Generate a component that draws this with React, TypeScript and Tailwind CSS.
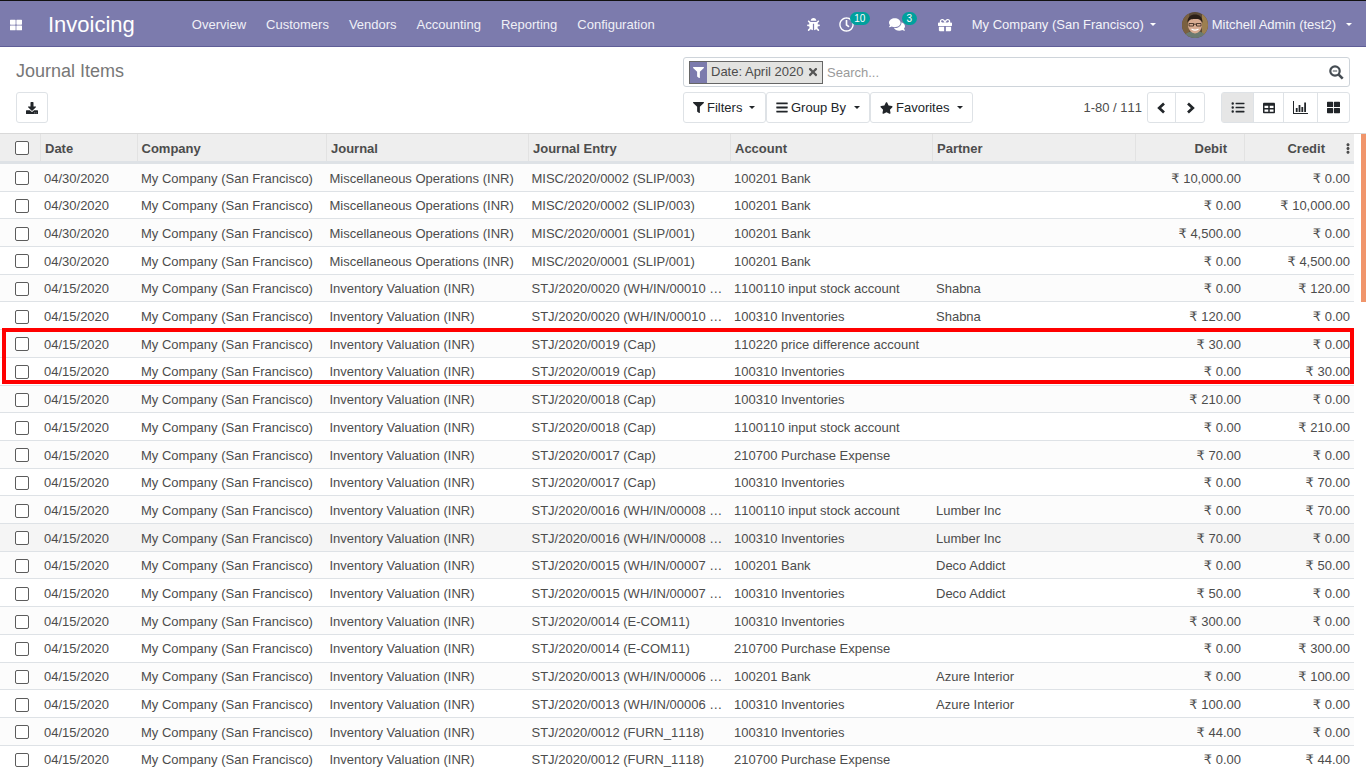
import React from "react";
import {
  FaThLarge, FaBug, FaRegClock, FaComments, FaGift, FaFilter, FaTimes, FaBars, FaStar,
  FaListUl, FaTable, FaDownload, FaEllipsisV,
} from "react-icons/fa";

const Caret = ({ className = "" }: { className?: string }) => (
  <span className={`inline-block w-0 h-0 border-x-[3px] border-x-transparent border-t-[3px] ${className}`} />
);

const Check = () => (
  <span className="block w-[14px] h-[14px] bg-white border-[1.5px] border-[#5c5c5c] rounded-[2px] shrink-0" />
);

const NAV = ["Overview", "Customers", "Vendors", "Accounting", "Reporting", "Configuration"];

type Row = [string, string, string, string, string, string, string];
const S = "My Company (San Francisco)";
const M = "Miscellaneous Operations (INR)";
const I = "Inventory Valuation (INR)";
const ROWS: Row[] = [
  ["04/30/2020", M, "MISC/2020/0002 (SLIP/003)", "100201 Bank", "", "₹ 10,000.00", "₹ 0.00"],
  ["04/30/2020", M, "MISC/2020/0002 (SLIP/003)", "100201 Bank", "", "₹ 0.00", "₹ 10,000.00"],
  ["04/30/2020", M, "MISC/2020/0001 (SLIP/001)", "100201 Bank", "", "₹ 4,500.00", "₹ 0.00"],
  ["04/30/2020", M, "MISC/2020/0001 (SLIP/001)", "100201 Bank", "", "₹ 0.00", "₹ 4,500.00"],
  ["04/15/2020", I, "STJ/2020/0020 (WH/IN/00010 (Shabna))", "1100110 input stock account", "Shabna", "₹ 0.00", "₹ 120.00"],
  ["04/15/2020", I, "STJ/2020/0020 (WH/IN/00010 (Shabna))", "100310 Inventories", "Shabna", "₹ 120.00", "₹ 0.00"],
  ["04/15/2020", I, "STJ/2020/0019 (Cap)", "110220 price difference account", "", "₹ 30.00", "₹ 0.00"],
  ["04/15/2020", I, "STJ/2020/0019 (Cap)", "100310 Inventories", "", "₹ 0.00", "₹ 30.00"],
  ["04/15/2020", I, "STJ/2020/0018 (Cap)", "100310 Inventories", "", "₹ 210.00", "₹ 0.00"],
  ["04/15/2020", I, "STJ/2020/0018 (Cap)", "1100110 input stock account", "", "₹ 0.00", "₹ 210.00"],
  ["04/15/2020", I, "STJ/2020/0017 (Cap)", "210700 Purchase Expense", "", "₹ 70.00", "₹ 0.00"],
  ["04/15/2020", I, "STJ/2020/0017 (Cap)", "100310 Inventories", "", "₹ 0.00", "₹ 70.00"],
  ["04/15/2020", I, "STJ/2020/0016 (WH/IN/00008 (Lumber))", "1100110 input stock account", "Lumber Inc", "₹ 0.00", "₹ 70.00"],
  ["04/15/2020", I, "STJ/2020/0016 (WH/IN/00008 (Lumber))", "100310 Inventories", "Lumber Inc", "₹ 70.00", "₹ 0.00"],
  ["04/15/2020", I, "STJ/2020/0015 (WH/IN/00007 (Deco))", "100201 Bank", "Deco Addict", "₹ 0.00", "₹ 50.00"],
  ["04/15/2020", I, "STJ/2020/0015 (WH/IN/00007 (Deco))", "100310 Inventories", "Deco Addict", "₹ 50.00", "₹ 0.00"],
  ["04/15/2020", I, "STJ/2020/0014 (E-COM11)", "100310 Inventories", "", "₹ 300.00", "₹ 0.00"],
  ["04/15/2020", I, "STJ/2020/0014 (E-COM11)", "210700 Purchase Expense", "", "₹ 0.00", "₹ 300.00"],
  ["04/15/2020", I, "STJ/2020/0013 (WH/IN/00006 (Azure))", "100201 Bank", "Azure Interior", "₹ 0.00", "₹ 100.00"],
  ["04/15/2020", I, "STJ/2020/0013 (WH/IN/00006 (Azure))", "100310 Inventories", "Azure Interior", "₹ 100.00", "₹ 0.00"],
  ["04/15/2020", I, "STJ/2020/0012 (FURN_1118)", "100310 Inventories", "", "₹ 44.00", "₹ 0.00"],
  ["04/15/2020", I, "STJ/2020/0012 (FURN_1118)", "210700 Purchase Expense", "", "₹ 0.00", "₹ 44.00"],
];

const COLS = "grid grid-cols-[41px_97px_189px_202px_202px_202px_203px_109px_109px]";

const Avatar = () => (
  <svg viewBox="0 0 26 26" className="w-[26px] h-[26px] rounded-full shrink-0">
    <rect width="26" height="26" fill="#5b4a38" />
    <rect x="0" y="0" width="7" height="26" fill="#7a6040" />
    <rect x="20" y="0" width="6" height="26" fill="#9c7f50" />
    <path d="M2 26c1-5 5-7 11-7s10 2 11 7z" fill="#6b7a70" />
    <ellipse cx="13" cy="13" rx="7" ry="8.500" fill="#d9ac92" />
    <path d="M5.500 11C5 5 9 2.500 13 2.500S21 5 20.500 11C19 7.500 17 7 13 7s-6 .5-7.500 4z" fill="#2b1f17" />
    <path d="M7 11.500h4.500v2.500H7zM14.500 11.500H19v2.500h-4.500zM11.500 12.200h3" fill="none" stroke="#33241b" strokeWidth=".8" />
    <path d="M9.500 17c2.300 1.500 4.700 1.500 7 0" fill="none" stroke="#fff" strokeWidth="1.100" />
  </svg>
);

const BarChart = () => (
  <svg viewBox="0 0 15 13" className="w-[15px] h-[13px]" fill="#212529">
    <path d="M0 0h1v12h14v1H0z" />
    <rect x="2.800" y="7" width="1.800" height="4" />
    <rect x="5.600" y="4" width="1.800" height="7" />
    <rect x="8.400" y="6" width="1.800" height="5" />
    <rect x="11.200" y="1.500" width="1.800" height="9.500" />
  </svg>
);

const Chevron = ({ right = false }: { right?: boolean }) => (
  <svg viewBox="0 0 9 12" className="w-[9px] h-[12px]" fill="none" stroke="#212529" strokeWidth="2.700">
    <polyline points={right ? "2,1.500 6.800,6 2,10.500" : "7,1.500 2.200,6 7,10.500"} />
  </svg>
);

const SearchIcon = () => (
  <svg viewBox="0 0 15 15" className="w-[15px] h-[15px]" fill="none" stroke="#454c53">
    <circle cx="6" cy="6" r="4.700" strokeWidth="2.200" />
    <path d="M3.800 6h4.400" strokeWidth="1" />
    <path d="M9.700 9.700l4 4" strokeWidth="2.600" />
  </svg>
);

export default function App() {
  return (
    <div className="relative h-[768px] w-[1366px] overflow-hidden bg-white text-[13px] text-[#4c4c4c] font-['Liberation_Sans','DejaVu_Sans',Arial,sans-serif]">
      {/* Top bar */}
      <header className="h-[47px] pt-[2px] border-t border-t-[#111] border-b border-b-[#5f5e97] bg-[#7c7bad] flex items-center text-white">
        <FaThLarge className="ml-[10px] w-[12px] h-[12px]" />
        <span className="ml-[26px] text-[22px] leading-none mr-[47px]">Invoicing</span>
        <nav className="flex text-[#f0f0f7]">
          {NAV.map((n) => (
            <span key={n} className="px-[10px]">{n}</span>
          ))}
        </nav>
        <div className="ml-auto flex items-center text-[#f4f4f9]">
          <FaBug className="w-[13px] h-[13px] text-white" />
          <span className="relative ml-[19px] mr-[35px]">
            <FaRegClock className="w-[15px] h-[15px] text-white" />
            <span className="absolute left-[11px] -top-[5px] h-[13px] w-[20px] rounded-full bg-[#00a09d] text-[10px] leading-[13px] text-center text-white">10</span>
          </span>
          <span className="relative mr-[33px]">
            <FaComments className="w-[16px] h-[15px] text-white" />
            <span className="absolute left-[13px] -top-[5px] h-[13px] w-[15px] rounded-full bg-[#00a09d] text-[10px] leading-[13px] text-center text-white">3</span>
          </span>
          <FaGift className="w-[14px] h-[14px] text-white mr-[20px]" />
          <span>{S}</span>
          <Caret className="ml-[6px] mr-[26px] border-t-white" />
          <Avatar />
          <span className="ml-[4px]">Mitchell Admin (test2)</span>
          <Caret className="ml-[10px] mr-[14px] border-t-white" />
        </div>
      </header>

      {/* Control panel */}
      <section className="h-[86px] flex">
        <div className="w-[683px] pl-4">
          <h1 className="mt-[13px] h-[22px] text-[18px] leading-[22px] font-normal text-[#777]">Journal Items</h1>
          <button className="mt-[10px] w-[32px] h-[31px] flex items-center justify-center bg-white border border-[#dee2e6] rounded-[3px] text-[#212529]">
            <FaDownload className="w-[12px] h-[12px]" />
          </button>
        </div>
        <div className="flex-1 pr-4 pt-[10px]">
          <div className="h-[30px] border border-[#ced4da] rounded-[3px] flex items-center pl-[5px] pr-[5px]">
            <span className="h-[23px] w-[134px] flex items-center bg-[#e3e3e1] border border-[#666] shrink-0">
              <span className="w-[17px] h-full bg-[#7c7bad] flex items-center justify-center text-white shrink-0">
                <FaFilter className="w-[11px] h-[11px]" />
              </span>
              <span className="ml-[4px] whitespace-nowrap">Date: April 2020</span>
              <FaTimes className="ml-[3px] w-[12px] h-[12px] text-[#555]" />
            </span>
            <span className="ml-[4px] mt-[2px] text-[#9a9a9a]">Search...</span>
            <span className="ml-auto"><SearchIcon /></span>
          </div>
          <div className="mt-[5px] h-[31px] flex items-center text-[#212529]">
            <button className="h-full w-[83px] pl-[9px] flex items-center border border-[#dee2e6] rounded-[3px]">
              <FaFilter className="w-[11px] h-[11px] mr-[3px]" />Filters<Caret className="ml-[7px] border-t-[#212529]" />
            </button>
            <button className="h-full w-[104px] pl-[9px] flex items-center border border-[#dee2e6] rounded-[3px]">
              <FaBars className="w-[12px] h-[13px] mr-[3px]" />Group By<Caret className="ml-[8px] border-t-[#212529]" />
            </button>
            <button className="h-full w-[103px] pl-[9px] flex items-center border border-[#dee2e6] rounded-[3px]">
              <FaStar className="w-[13px] h-[12px] mr-[3px]" />Favorites<Caret className="ml-[8px] border-t-[#212529]" />
            </button>
            <span className="ml-auto mr-[5px] [font-kerning:none] text-[#4c4c4c]">1-80 / 111</span>
            <div className="flex h-full w-[58px] border border-[#dee2e6] rounded-[3px] divide-x divide-[#dee2e6]">
              <span className="w-[28px] flex items-center justify-center"><Chevron /></span>
              <span className="flex-1 flex items-center justify-center"><Chevron right /></span>
            </div>
            <div className="ml-[16px] flex h-full w-[129px] border border-[#dee2e6] rounded-[3px] divide-x divide-[#dee2e6]">
              <span className="w-[32px] bg-[#e6e6e6] flex items-center justify-center"><FaListUl className="w-[14px] h-[13px]" /></span>
              <span className="w-[30px] flex items-center justify-center"><FaTable className="w-[12px] h-[12px]" /></span>
              <span className="w-[34px] flex items-center justify-center"><BarChart /></span>
              <span className="flex-1 flex items-center justify-center"><FaThLarge className="w-[13px] h-[13px]" /></span>
            </div>
          </div>
        </div>
      </section>

      {/* List */}
      <div className="flex border-t border-t-[#d9d9d9]">
        <main className="w-[1354px] shrink-0">
          <div className={`${COLS} h-[29.93px] bg-[#eeeeee] border-b-[3px] border-b-[#dee2e6] font-bold`}>
            <div className="flex items-center pl-[15px] pt-[1px] border-r border-[#e2e2e2]"><Check /></div>
            <div className="flex items-center pl-[4px] pt-[3px] border-r border-[#e2e2e2]">Date</div>
            <div className="flex items-center pl-[3.5px] pt-[3px] border-r border-[#e2e2e2]">Company</div>
            <div className="flex items-center pl-[4px] pt-[3px] border-r border-[#e2e2e2]">Journal</div>
            <div className="flex items-center pl-[4px] pt-[3px] border-r border-[#e2e2e2]">Journal Entry</div>
            <div className="flex items-center pl-[4px] pt-[3px] border-r border-[#e2e2e2]">Account</div>
            <div className="flex items-center pl-[4px] pt-[3px] border-r border-[#e2e2e2]">Partner</div>
            <div className="flex items-center justify-end pr-[17px] pt-[3px] border-r border-[#e2e2e2]">Debit</div>
            <div className="flex items-center justify-end pr-[1px] pt-[3px]">
              Credit
              <FaEllipsisV className="ml-[18px] w-[10px] h-[11px]" />
            </div>
          </div>
          {ROWS.map((r, i) => (
            <div key={i} className={`${COLS} h-[27.71px] pt-[2px] items-center border-b border-b-[#dee2e6] ${i === 13 ? "bg-[#f5f5f5]" : i % 2 === 0 ? "bg-[#fcfcfc]" : "bg-white"}`}>
              <div className="pl-[15px]"><Check /></div>
              <div className="pl-[3px] [font-kerning:none]">{r[0]}</div>
              <div className="pl-[3px] whitespace-nowrap">{S}</div>
              <div className="pl-[2.500px] whitespace-nowrap">{r[1]}</div>
              <div className="pl-[2.500px] pr-[5px] truncate [font-kerning:none]">{r[2]}</div>
              <div className="pl-[3px] whitespace-nowrap [font-kerning:none]">{r[3]}</div>
              <div className="pl-[3px] whitespace-nowrap">{r[4]}</div>
              <div className="pr-[4px] text-right [font-kerning:none]">{r[5]}</div>
              <div className="pr-[4px] text-right [font-kerning:none]">{r[6]}</div>
            </div>
          ))}
        </main>
        <aside className="flex-1 flex justify-end">
          <div className="w-[5px] h-[168px] bg-[#f0956b]" />
        </aside>
      </div>

      {/* Red annotation */}
      <div className="absolute left-[2px] top-[328px] w-[1352px] h-[56px] border-4 border-[#ff0000]" />
    </div>
  );
}
